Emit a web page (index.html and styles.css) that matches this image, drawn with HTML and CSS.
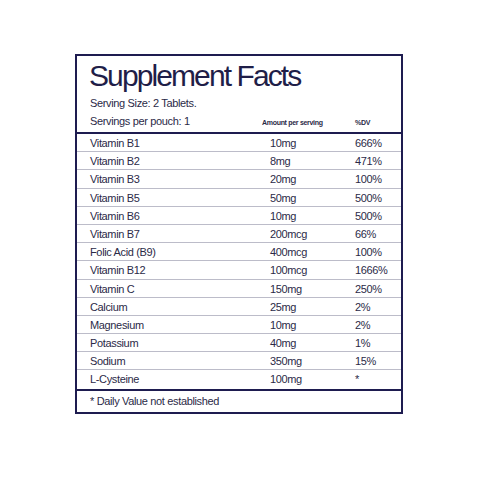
FILE: index.html
```html
<!DOCTYPE html>
<html>
	<head>
		<meta charset="UTF-8">
		<title>Supplement Facts</title>
		<link rel="stylesheet" href="styles.css">
	</head>
	<body>
		<div class="label">
			<div class="head">
				<h1 class="title">Supplement Facts</h1>
				<p class="serving">Serving Size: 2 Tablets.</p>
				<div class="row colhead">
					<span>Servings per pouch: 1</span>
					<span class="small amt">Amount per serving</span>
					<span class="small">%DV</span>
				</div>
			</div>
			<div class="row"><span>Vitamin B1</span><span>10mg</span><span>666%</span></div>
			<div class="row"><span>Vitamin B2</span><span>8mg</span><span>471%</span></div>
			<div class="row"><span>Vitamin B3</span><span>20mg</span><span>100%</span></div>
			<div class="row"><span>Vitamin B5</span><span>50mg</span><span>500%</span></div>
			<div class="row"><span>Vitamin B6</span><span>10mg</span><span>500%</span></div>
			<div class="row"><span>Vitamin B7</span><span>200mcg</span><span>66%</span></div>
			<div class="row"><span>Folic Acid (B9)</span><span>400mcg</span><span>100%</span></div>
			<div class="row"><span>Vitamin B12</span><span>100mcg</span><span>1666%</span></div>
			<div class="row"><span>Vitamin C</span><span>150mg</span><span>250%</span></div>
			<div class="row"><span>Calcium</span><span>25mg</span><span>2%</span></div>
			<div class="row"><span>Magnesium</span><span>10mg</span><span>2%</span></div>
			<div class="row"><span>Potassium</span><span>40mg</span><span>1%</span></div>
			<div class="row"><span>Sodium</span><span>350mg</span><span>15%</span></div>
			<div class="row last"><span>L-Cysteine</span><span>100mg</span><span>*</span></div>
			<p class="note">* Daily Value not established</p>
		</div>
	</body>
</html>
```

FILE: styles.css
```css
*{padding:0;margin:0;box-sizing:border-box;}
body{background:#fff;font-family:"Liberation Sans",Arial,sans-serif;font-size:11px;color:#2b2a47;}
.label{width:328px;margin:54px 0 0 75px;border:2px solid #1e1c50;}
.head{padding-top:5px;border-bottom:2px solid #1e1c50;}
.title{padding-left:12px;font-size:30px;line-height:30px;font-weight:normal;letter-spacing:-1.9px;color:#1f1e48;}
.serving{margin-top:3px;padding-left:13px;line-height:18px;letter-spacing:-0.35px;}
.row{display:grid;grid-template-columns:180px 84px 1fr;align-items:baseline;height:18.2px;padding:2px 0 0 13px;line-height:15px;letter-spacing:-0.35px;border-bottom:1px solid #bcbcc9;}
.row.last{border-bottom:0;}
.row span:nth-child(3){padding-left:1px;}
.colhead{height:20px;padding-top:0;line-height:18px;border-bottom:0;}
.small{font-size:7px;font-weight:bold;letter-spacing:-0.3px;}
.amt{margin-left:-8px;}
.note{height:23px;padding-left:13px;line-height:21px;letter-spacing:-0.35px;border-top:2px solid #1e1c50;}
```
